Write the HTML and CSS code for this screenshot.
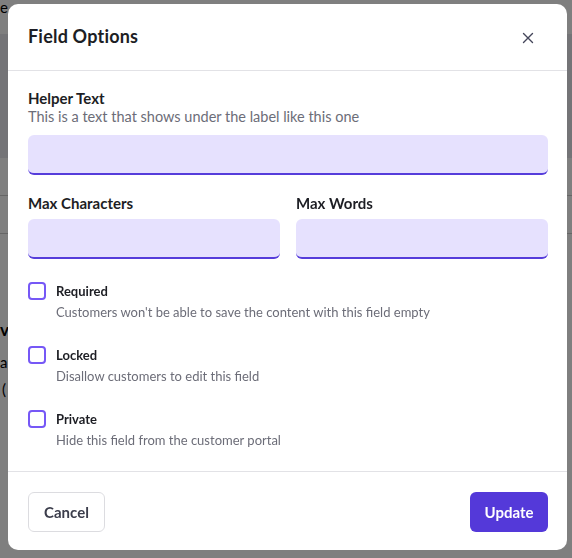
FILE: index.html
```html
<!DOCTYPE html>
<html>
	<head>
		<meta charset="UTF-8">
		<title>Field Options</title>
		<link rel="stylesheet" href="styles.css">
	</head>
	<body>
		<div class="page">
			<div class="page-top">e</div>
			<div class="page-band"></div>
			<div class="page-rule"></div>
			<div class="page-rule"></div>
			<div class="page-bold">v</div>
			<div class="page-line">a</div>
			<div class="page-line">(</div>
		</div>

		<div class="overlay">
			<div class="modal">
				<div class="modal-head">
					<h2>Field Options</h2>
					<button class="close">
						<svg width="12" height="12" viewBox="0 0 12 12"><path d="M1.5 1.5L10.5 10.5M10.5 1.5L1.5 10.5" stroke="#44465a" stroke-width="1.4" stroke-linecap="round"/></svg>
					</button>
				</div>

				<div class="modal-body">
					<div class="label">Helper Text</div>
					<div class="hint">This is a text that shows under the label like this one</div>
					<input class="field" type="text">

					<div class="two-col">
						<div>
							<div class="label">Max Characters</div>
							<input class="field field-short" type="text">
						</div>
						<div>
							<div class="label">Max Words</div>
							<input class="field field-short" type="text">
						</div>
					</div>

					<div class="checks">
						<div class="check">
							<span class="box"></span>
							<div>
								<div class="check-title">Required</div>
								<div class="check-desc">Customers won't be able to save the content with this field empty</div>
							</div>
						</div>
						<div class="check">
							<span class="box"></span>
							<div>
								<div class="check-title">Locked</div>
								<div class="check-desc">Disallow customers to edit this field</div>
							</div>
						</div>
						<div class="check">
							<span class="box"></span>
							<div>
								<div class="check-title">Private</div>
								<div class="check-desc">Hide this field from the customer portal</div>
							</div>
						</div>
					</div>
				</div>

				<div class="modal-foot">
					<button class="btn btn-cancel">Cancel</button>
					<button class="btn btn-update">Update</button>
				</div>
			</div>
		</div>
	</body>
</html>
```

FILE: styles.css
```css
*{margin: 0;padding: 0;box-sizing: border-box;}
body{
	font-family: Lato, "Liberation Sans", sans-serif;
	color: #1d1e24;
	background: #fff;
	overflow: hidden;
}
.page{
	height: 558px;
	color: #000;
}
.page-top{
	font-size: 15px;
	line-height: 14px;
}
.page-band{
	height: 124px;
	margin-top: 20px;
	background: #e8e8ee;
}
.page-rule{
	height: 38px;
	border-bottom: 1px solid #ccc;
}
.page-bold{
	font-weight: bold;
	font-size: 17px;
	margin-top: 85px;
}
.page-line{
	font-size: 15px;
	margin-top: 13px;
}
.page-line + .page-line{
	margin-top: 9px;
	padding-left: 2px;
}
.overlay{
	position: fixed;
	top: 0;
	left: 0;
	right: 0;
	bottom: 0;
	background: rgba(0,0,0,0.5);
	padding: 4px 5px 8px 8px;
	display: flex;
}
.modal{
	flex: 1;
	background: #fff;
	border-radius: 10px;
	display: flex;
	flex-direction: column;
}
.modal-head{
	height: 67px;
	border-bottom: 1px solid #e2e2e6;
	display: flex;
	align-items: center;
	justify-content: space-between;
	padding: 0 33px 2px 20px;
}
.modal-head h2{
	font-size: 18px;
	font-weight: bold;
	letter-spacing: 0.2px;
}
.close{
	border: 0;
	background: none;
	width: 12px;
	height: 12px;
	display: flex;
	margin-top: 4px;
}
.modal-body{
	padding: 17px 19px 22px 20px;
	border-bottom: 1px solid #e2e2e6;
}
.label{
	font-size: 15px;
	font-weight: bold;
	line-height: 20px;
}
.hint{
	font-size: 14.5px;
	line-height: 18px;
	color: #6c6d78;
}
.field{
	display: block;
	width: 100%;
	height: 40px;
	margin-top: 9px;
	border: 0;
	border-bottom: 2px solid #563ddb;
	border-radius: 6px;
	background: #e6e1fe;
	outline: none;
}
.two-col{
	display: grid;
	grid-template-columns: 1fr 1fr;
	gap: 16px;
	margin-top: 18px;
}
.field-short{
	margin-top: 6px;
}
.checks{
	margin-top: 22px;
	display: flex;
	flex-direction: column;
	gap: 24px;
}
.check{
	display: flex;
	gap: 10px;
}
.box{
	width: 18px;
	height: 18px;
	margin-top: 1px;
	border: 2px solid #7658f6;
	border-radius: 4px;
	flex: none;
}
.check-title{
	font-size: 13px;
	font-weight: bold;
	line-height: 20px;
}
.check-desc{
	font-size: 13px;
	line-height: 18px;
	margin-top: 2px;
	color: #6c6d78;
}
.modal-foot{
	flex: 1;
	display: flex;
	justify-content: space-between;
	align-items: flex-start;
	padding: 20px 19px 0 20px;
}
.btn{
	height: 40px;
	border-radius: 6px;
	font-family: inherit;
	font-size: 15px;
	font-weight: bold;
}
.btn-cancel{
	width: 77px;
	background: #fff;
	border: 1px solid #dcdce0;
	color: #3b3d4b;
}
.btn-update{
	width: 78px;
	background: #5439d9;
	border: 0;
	color: #fff;
}
```
